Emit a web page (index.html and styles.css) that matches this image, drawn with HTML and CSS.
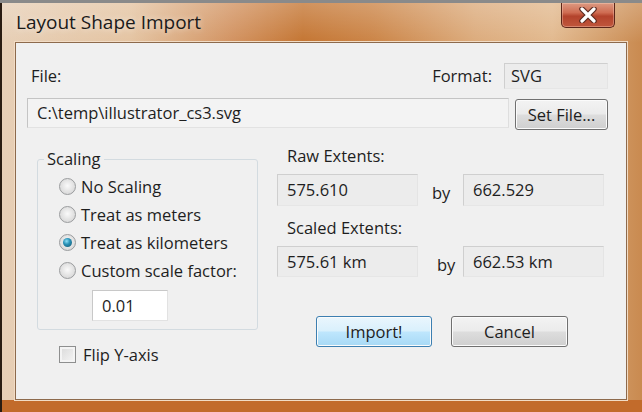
FILE: index.html
```html
<!DOCTYPE html>
<html>
<head>
<meta charset="utf-8">
<link rel="stylesheet" href="styles.css">
</head>
<body>
<div class="topline"></div>
<div class="window">
  <div class="titlebar">
    <span class="title">Layout Shape Import</span>
    <div class="close">
      <svg width="20" height="16" viewBox="0 0 20 16">
        <path d="M4 2 L16 14 M16 2 L4 14" stroke="#5a2a20" stroke-width="5.5" stroke-linecap="round"/>
        <path d="M4 2 L16 14 M16 2 L4 14" stroke="#ffffff" stroke-width="3.2" stroke-linecap="round"/>
      </svg>
    </div>
  </div>
  <div class="client">
    <div class="row1">
      <span class="lbl file-lbl">File:</span>
      <span class="spacer"></span>
      <span class="lbl fmt-lbl">Format:</span>
      <div class="field fmt">SVG</div>
    </div>
    <div class="row2">
      <div class="field path">C:\temp\illustrator_cs3.svg</div>
      <button class="btn setfile">Set File...</button>
    </div>
    <div class="main">
      <div class="left">
        <fieldset class="group">
          <legend>Scaling</legend>
          <div class="radio-row"><span class="radio"></span>No Scaling</div>
          <div class="radio-row"><span class="radio"></span>Treat as meters</div>
          <div class="radio-row"><span class="radio checked"></span>Treat as kilometers</div>
          <div class="radio-row"><span class="radio"></span>Custom scale factor:</div>
          <div class="field factor">0.01</div>
        </fieldset>
        <div class="check-row"><span class="checkbox"></span>Flip Y-axis</div>
      </div>
      <div class="right">
        <div class="cap">Raw Extents:</div>
        <div class="extrow">
          <div class="field ext">575.610</div>
          <span class="by">by</span>
          <div class="field ext">662.529</div>
        </div>
        <div class="cap cap2">Scaled Extents:</div>
        <div class="extrow extrow2">
          <div class="field ext">575.61 km</div>
          <span class="by">by</span>
          <div class="field ext">662.53 km</div>
        </div>
        <div class="buttons">
          <button class="btn import">Import!</button>
          <button class="btn cancel">Cancel</button>
        </div>
      </div>
    </div>
  </div>
</div>
</body>
</html>
```
FILE: styles.css
```css
html, body {
  margin: 0;
  padding: 0;
}
body {
  width: 642px;
  height: 412px;
  overflow: hidden;
  background: #7d7d7d;
  font-family: "Open Sans", "DejaVu Sans", sans-serif;
  font-size: 16.5px;
  color: #1e1e1e;
}
.topline {
  height: 3px;
  background: #8a8a8a;
}
.window {
  height: 409px;
  box-sizing: border-box;
  padding: 0 15px 12px 13px;
  border-left: 2px solid #2a1c12;
  display: flex;
  flex-direction: column;
  background:
    linear-gradient(to bottom, rgba(255,255,255,0.22), rgba(255,255,255,0) 40px),
    linear-gradient(to bottom, transparent 397px, #c26b2b 397px),
    linear-gradient(90deg, #e7cfb6 0%, #e4c4a2 20%, #d29260 36%, #c47532 47%, #cb8446 58%, #dcab7c 74%, #e2b98e 86%, #c98a50 100%);
}
.titlebar {
  height: 39px;
  display: flex;
  justify-content: space-between;
  align-items: flex-start;
}
.title {
  font-size: 19px;
  line-height: 24px;
  margin: 7px 0 0 1px;
  color: #1a1a1a;
  text-shadow: 0 0 6px rgba(255,255,255,0.7);
}
.close {
  width: 54px;
  height: 25px;
  margin-right: 12px;
  box-sizing: border-box;
  border: 1px solid #5b2519;
  border-top: none;
  border-radius: 0 0 5px 5px;
  background: linear-gradient(#dc9a82 0%, #cf6c52 40%, #b3432c 55%, #c0563c 100%);
  box-shadow: inset 0 0 0 1px rgba(255,220,200,0.35);
  display: flex;
  align-items: center;
  justify-content: center;
}
.client {
  flex: 1;
  background: #f0f0f0;
  border: 1px solid #8d6a4c;
  box-shadow: 0 0 0 1px #f2dcc5;
  padding: 20px 18px 0 11px;
}
.row1 {
  display: flex;
  align-items: center;
  height: 26px;
}
.lbl { line-height: 20px; }
.file-lbl { margin-left: 4px; }
.spacer { flex: 1; }
.fmt-lbl { margin-right: 12px; }
.field {
  box-sizing: border-box;
  display: flex;
  align-items: center;
  padding-left: 9px;
  background: #ececec;
  border: 1px solid;
  border-color: #cfcfcf #e4e4e4 #e6e6e6 #cfcfcf;
  line-height: 20px;
}
.fmt {
  width: 104px;
  height: 26px;
  padding-left: 6px;
}
.row2 {
  display: flex;
  margin-top: 9px;
  height: 31px;
}
.path {
  flex: 1;
  height: 30px;
  background: #f3f3f3;
  border-color: #c4c4c4 #dedede #e2e2e2 #c4c4c4;
}
.btn {
  font-family: inherit;
  font-size: 16.5px;
  line-height: 20px;
  color: #1e1e1e;
  box-sizing: border-box;
  border: 1px solid #707070;
  border-radius: 3px;
  background: linear-gradient(#f3f3f3 0%, #ebebeb 48%, #dddddd 52%, #cfcfcf 100%);
  box-shadow: inset 0 0 0 1px #fbfbfb;
  padding: 0;
  margin: 0;
}
.setfile {
  width: 93px;
  height: 31px;
  margin-left: 6px;
  margin-top: 1px;
}
.main {
  display: flex;
  margin-top: 18px;
}
.left {
  width: 221px;
  margin-left: 10px;
}
.group {
  margin: 2px 0 0 0;
  padding: 3px 0 8px 21px;
  border: 1px solid #d3dbe0;
  border-radius: 3px;
}
.group legend {
  padding: 0 3px;
  margin-left: -15px;
  line-height: 20px;
}
.radio-row {
  height: 28px;
  display: flex;
  align-items: center;
  white-space: nowrap;
}
.radio {
  width: 17px;
  height: 17px;
  box-sizing: border-box;
  border-radius: 50%;
  border: 1px solid #9a9c9e;
  background: radial-gradient(circle at 50% 45%, #fafafa 0%, #e6e6e6 45%, #cfcfcf 100%);
  margin-right: 5px;
  flex: none;
  display: flex;
  align-items: center;
  justify-content: center;
}
.radio.checked::after {
  content: "";
  width: 9px;
  height: 9px;
  border-radius: 50%;
  background: radial-gradient(circle at 40% 35%, #8fe0f6 0%, #2b93b8 40%, #0d4f68 100%);
}
.factor {
  width: 76px;
  height: 31px;
  margin: 6px 0 0 33px;
  background: #ffffff;
  border-color: #c8c8c8 #e2e2e2 #e2e2e2 #c8c8c8;
}
.check-row {
  display: flex;
  align-items: center;
  height: 20px;
  margin: 14px 0 0 22px;
}
.checkbox {
  width: 17px;
  height: 17px;
  box-sizing: border-box;
  border: 1px solid #8e8f8f;
  background: linear-gradient(135deg, #d9d9d9, #f6f6f6);
  box-shadow: inset 0 0 0 2px #f4f4f4;
  margin-right: 7px;
}
.right {
  margin-left: 19px;
  width: 330px;
}
.cap {
  line-height: 20px;
  padding-left: 10px;
  margin-top: -1px;
}
.cap2 { margin-top: 12px; }
.extrow {
  display: flex;
  align-items: center;
  margin-top: 8px;
  height: 32px;
}
.extrow2 { height: 31px; }
.ext {
  width: 141px;
  height: 100%;
}
.by {
  width: 45px;
  box-sizing: border-box;
  padding-left: 14px;
  margin-top: 6px;
  line-height: 20px;
}
.extrow2 .by { padding-left: 19px; }
.buttons {
  display: flex;
  margin-top: 39px;
  margin-left: 39px;
}
.import {
  width: 116px;
  height: 31px;
  border-color: #3c7fb1;
  background: linear-gradient(#eaf6fd 0%, #d9f0fc 48%, #bee6fd 52%, #a7d9f5 100%);
}
.cancel {
  width: 117px;
  height: 31px;
  margin-left: 19px;
}
```
